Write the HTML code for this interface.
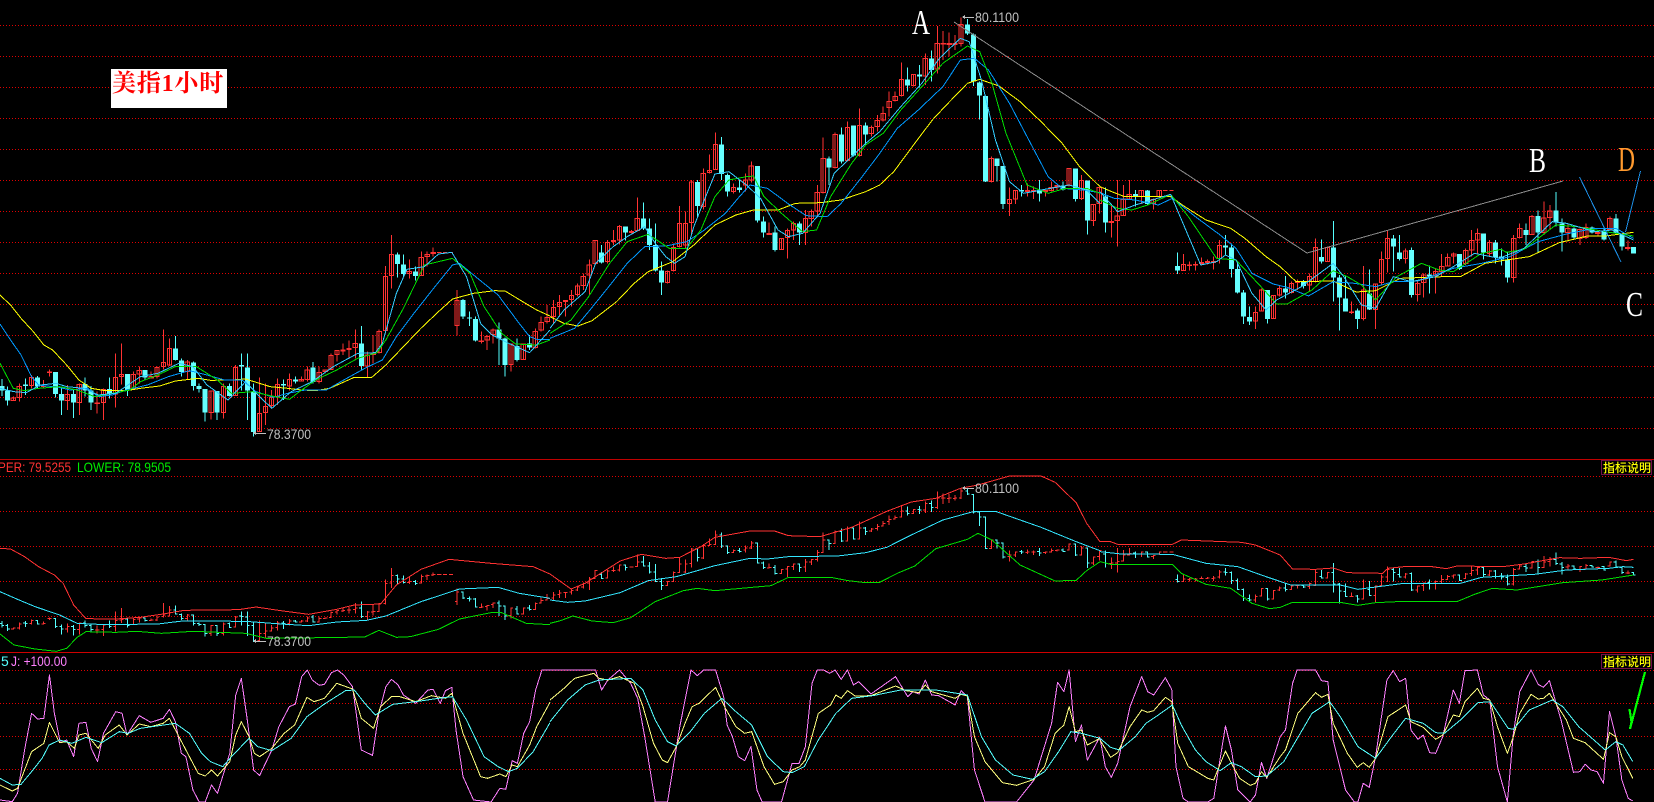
<!DOCTYPE html>
<html><head><meta charset="utf-8"><title>美指1小时</title>
<style>
html,body{margin:0;padding:0;background:#000;width:1654px;height:802px;overflow:hidden}
svg{display:block;position:absolute;left:0;top:0}
.s{fill:none;vector-effect:non-scaling-stroke;shape-rendering:crispEdges}
.m{fill:none;vector-effect:non-scaling-stroke;stroke-width:1;stroke-linejoin:round;shape-rendering:crispEdges}
.t{font-family:"Liberation Sans",sans-serif}
</style></head><body>
<svg width="1654" height="802" viewBox="0 0 1654 802" xmlns="http://www.w3.org/2000/svg">
<rect width="1654" height="802" fill="#000"/>
<defs>
<path id="rw1" class="s" d="M38 1190V1201M55 1150V1205M90 1125V1165M124 1140V1165M141 1108V1130M192 1155V1230M226 1150V1245M277 1175V1240M295 1165V1260M329 1060V1222M346 1030V1153M380 1115V1170M397 1100V1150M431 1115V1135M448 1100V1135M466 988V1108M483 1015V1098M534 1080V1140M602 1172V1258M637 1150V1255M671 1095V1188M740 1132V1295M757 1150V1275M774 1170V1222M791 1135V1215M825 1120V1172M859 1130V1145M876 1100V1145M910 1100V1150M927 1110V1120M944 1060V1110M961 1050V1085M978 1030V1065M995 1022V1075M1013 988V1075M1047 1055V1132M1064 1005V1090M1081 988V1060M1099 798V1000M1116 705V865M1167 778V835M1201 755V828M1218 755V800M1235 742V770M1246 758h12M1263 758h12M1280 758h12M1303 870V1007M1372 995V1030M1389 1005V1050M1406 985V1030M1457 1030V1115M1492 1030V1080M1526 985V1045M1543 950V995M1560 915V970"/>
<path id="rb1" class="s" d="M32 1194h12V1201h-12zM49 1160h12V1192h-12zM84 1133h12V1157h-12zM118 1158h12V1160h-12zM135 1116h12V1118h-12zM186 1183h12V1202h-12zM220 1153h12V1207h-12zM271 1209h12V1211h-12zM289 1168h12V1208h-12zM323 1132h12V1182h-12zM340 1123h12V1129h-12zM374 1123h12V1167h-12zM391 1111h12V1122h-12zM425 1130h12V1134h-12zM442 1103h12V1130h-12zM460 1088h12V1100h-12zM477 1045h12V1095h-12zM528 1086h12V1115h-12zM596 1173h12V1238h-12zM631 1160h12V1238h-12zM665 1102h12V1186h-12zM734 1240h12V1295h-12zM751 1220h12V1238h-12zM768 1192h12V1217h-12zM785 1153h12V1190h-12zM819 1138h12V1158h-12zM853 1138h12V1143h-12zM870 1110h12V1138h-12zM904 1118h12V1145h-12zM921 1110h12V1115h-12zM938 1067h12V1108h-12zM955 1052h12V1063h-12zM972 1050h12V1053h-12zM989 1045h12V1048h-12zM1007 1030h12V1043h-12zM1041 1065h12V1098h-12zM1058 1060h12V1063h-12zM1075 994h12V1058h-12zM1093 829h12V992h-12zM1110 763h12V826h-12zM1161 815h12V820h-12zM1195 772h12V827h-12zM1212 764h12V769h-12zM1229 757h12V760h-12zM1297 901h12V976h-12zM1366 1023h12V1025h-12zM1383 1010h12V1020h-12zM1400 990h12V1003h-12zM1451 1032h12V1093h-12zM1486 1032h12V1078h-12zM1520 994h12V1042h-12zM1537 968h12V990h-12zM1554 952h12V964h-12z"/>
<path id="rt1" class="s" d="M32 1201h6V1194h6M49 1192h6V1160h6M84 1157h6V1133h6M118 1160h6V1158h6M135 1118h6V1116h6M186 1202h6V1183h6M220 1207h6V1153h6M271 1211h6V1209h6M289 1208h6V1168h6M323 1182h6V1132h6M340 1129h6V1123h6M374 1167h6V1123h6M391 1122h6V1111h6M425 1134h6V1130h6M442 1130h6V1103h6M460 1100h6V1088h6M477 1095h6V1045h6M528 1115h6V1086h6M596 1238h6V1173h6M631 1238h6V1160h6M665 1186h6V1102h6M734 1295h6V1240h6M751 1238h6V1220h6M768 1217h6V1192h6M785 1190h6V1153h6M819 1158h6V1138h6M853 1143h6V1138h6M870 1138h6V1110h6M904 1145h6V1118h6M921 1115h6V1110h6M938 1108h6V1067h6M955 1063h6V1052h6M972 1053h6V1050h6M989 1048h6V1045h6M1007 1043h6V1030h6M1041 1098h6V1065h6M1058 1063h6V1060h6M1075 1058h6V994h6M1093 992h6V829h6M1110 826h6V763h6M1161 820h6V815h6M1195 827h6V772h6M1212 769h6V764h6M1229 760h6V757h6M1297 976h6V901h6M1366 1025h6V1023h6M1383 1020h6V1010h6M1400 1003h6V990h6M1451 1093h6V1032h6M1486 1078h6V1032h6M1520 1042h6V994h6M1537 990h6V968h6M1554 964h6V952h6"/>
<path id="cw1" class="s" d="M5 1137V1188M22 1160V1217M72 1135V1185M107 1128V1165M158 1116V1193M175 1165V1245M209 1170V1254M243 1133V1190M260 1158V1230M312 1132V1195M363 1122V1188M414 1110V1142M500 1008V1082M517 1075V1130M551 1085V1172M568 1150V1178M585 1167V1265M619 1173V1260M654 1150V1190M688 1060V1172M705 1060V1260M723 1150V1310M808 1138V1200M842 1130V1150M893 1086V1150M1030 978V1110M1133 757V833M1150 763V830M1184 800V842M1320 897V957M1338 935V978M1355 950V1025M1423 968V1095M1440 1012V1130M1474 1015V1085M1509 1005V1050"/>
<path id="cb1" class="s" d="M5 1158V1172M22 1172V1202M72 1153V1158M107 1133V1160M158 1116V1182M175 1182V1202M209 1182V1208M243 1152V1172M260 1172V1208M312 1167V1182M363 1122V1172M414 1110V1132M500 1045V1080M517 1082V1116M551 1087V1158M568 1158V1167M585 1167V1238M619 1173V1238M654 1158V1188M688 1095V1100M705 1102V1172M723 1175V1296M808 1152V1156M842 1138V1145M893 1102V1146M1030 1030V1098M1133 763V792M1150 793V822M1184 814V828M1320 900V950M1338 952V956M1355 957V1022M1423 988V1015M1440 1015V1095M1474 1038V1080M1509 1030V1043"/>
<path id="ct1" class="s" d="M-1 1158h6V1172h6M16 1172h6V1202h6M66 1153h6V1158h6M101 1133h6V1160h6M152 1116h6V1182h6M169 1182h6V1202h6M203 1182h6V1208h6M237 1152h6V1172h6M254 1172h6V1208h6M306 1167h6V1182h6M357 1122h6V1172h6M408 1110h6V1132h6M494 1045h6V1080h6M511 1082h6V1116h6M545 1087h6V1158h6M562 1158h6V1167h6M579 1167h6V1238h6M613 1173h6V1238h6M648 1158h6V1188h6M682 1095h6V1100h6M699 1102h6V1172h6M717 1175h6V1296h6M802 1152h6V1156h6M836 1138h6V1145h6M887 1102h6V1146h6M1024 1030h6V1098h6M1127 763h6V792h6M1144 793h6V822h6M1178 814h6V828h6M1314 900h6V950h6M1332 952h6V956h6M1349 957h6V1022h6M1417 988h6V1015h6M1434 1015h6V1095h6M1468 1038h6V1080h6M1503 1030h6V1043h6"/>

<path id="rw2" class="s" d="M10 900V970M27 885V950M44 900V950M61 870V920M78 850V890M95 820V870M112 778V883M129 720V793M164 720V790M181 690V735M198 675V733M232 690V700M249 592V695M335 812V850M352 730V815M369 618V742M386 635V745M403 540V700M437 505V628M455 463V520M472 397V510M523 550V580M557 520V575M574 484V548M625 668V705M660 714V750M677 685V776M694 665V720M728 630V735M745 628V680M762 555V650M779 412V580M813 398V505M848 365V485M882 325V470M916 376V410M933 345V395M950 320V365M967 275V350M984 275V305M1002 187V290M1036 222V260M1070 160V255M1104 78V220M1121 93V180M1138 97V170M1155 105V150M1172 52V140M1258 470V547M1310 562V648M1327 570V612M1361 550V590M1378 560V597M1412 570V590M1429 545V575M1446 555V570M1480 505V560M1515 525V600M1549 612V678M1566 562V640"/>
<path id="rb2" class="s" d="M4 922h12V950h-12zM21 908h12V920h-12zM38 902h12V905h-12zM55 887h12V899h-12zM72 858h12V884h-12zM89 830h12V857h-12zM106 795h12V825h-12zM123 722h12V790h-12zM158 727h12V785h-12zM175 722h12V725h-12zM192 680h12V720h-12zM226 694h12V697h-12zM243 656h12V692h-12zM329 814h12V848h-12zM346 742h12V812h-12zM363 670h12V740h-12zM380 670h12V735h-12zM397 546h12V668h-12zM431 520h12V620h-12zM449 511h12V518h-12zM466 433h12V509h-12zM517 562h12V575h-12zM551 540h12V555h-12zM568 498h12V540h-12zM619 700h12V703h-12zM654 715h12V748h-12zM671 692h12V712h-12zM688 670h12V690h-12zM722 655h12V697h-12zM739 634h12V655h-12zM756 577h12V633h-12zM773 475h12V577h-12zM807 403h12V503h-12zM842 382h12V482h-12zM876 376h12V467h-12zM910 383h12V401h-12zM927 362h12V380h-12zM944 340h12V360h-12zM961 305h12V322h-12zM978 290h12V302h-12zM996 238h12V287h-12zM1030 223h12V257h-12zM1064 175h12V228h-12zM1098 130h12V207h-12zM1115 130h12V132h-12zM1132 130h12V133h-12zM1149 130h12V133h-12zM1166 73h12V130h-12zM1252 475h12V545h-12zM1304 598h12V611h-12zM1321 571h12V597h-12zM1355 571h12V575h-12zM1372 572h12V574h-12zM1406 572h12V575h-12zM1423 562h12V572h-12zM1440 557h12V560h-12zM1474 505h12V557h-12zM1509 541h12V595h-12zM1543 613h12V662h-12zM1560 562h12V610h-12z"/>
<path id="rt2" class="s" d="M4 950h6V922h6M21 920h6V908h6M38 905h6V902h6M55 899h6V887h6M72 884h6V858h6M89 857h6V830h6M106 825h6V795h6M123 790h6V722h6M158 785h6V727h6M175 725h6V722h6M192 720h6V680h6M226 697h6V694h6M243 692h6V656h6M329 848h6V814h6M346 812h6V742h6M363 740h6V670h6M380 735h6V670h6M397 668h6V546h6M431 620h6V520h6M449 518h6V511h6M466 509h6V433h6M517 575h6V562h6M551 555h6V540h6M568 540h6V498h6M619 703h6V700h6M654 748h6V715h6M671 712h6V692h6M688 690h6V670h6M722 697h6V655h6M739 655h6V634h6M756 633h6V577h6M773 577h6V475h6M807 503h6V403h6M842 482h6V382h6M876 467h6V376h6M910 401h6V383h6M927 380h6V362h6M944 360h6V340h6M961 322h6V305h6M978 302h6V290h6M996 287h6V238h6M1030 257h6V223h6M1064 228h6V175h6M1098 207h6V130h6M1115 132h6V130h6M1132 133h6V130h6M1149 133h6V130h6M1166 130h6V73h6M1252 545h6V475h6M1304 611h6V598h6M1321 597h6V571h6M1355 575h6V571h6M1372 574h6V572h6M1406 575h6V572h6M1423 572h6V562h6M1440 560h6V557h6M1474 557h6V505h6M1509 595h6V541h6M1543 662h6V613h6M1560 610h6V562h6"/>
<path id="cw2" class="s" d="M147 735V790M215 679V722M266 607V690M284 655V750M301 670V815M318 785V885M420 540V650M489 411V540M506 520V590M540 540V578M591 498V668M608 650V713M642 680V755M711 665V735M796 470V555M831 382V490M865 376V470M899 368V435M1019 202V275M1053 195V262M1087 152V245M1190 57V105M1207 100V258M1224 245V358M1241 287V546M1275 475V545M1292 498V627M1344 555V590M1395 540V605M1463 545V572M1498 505V605M1532 541V704"/>
<path id="cb2" class="s" d="M147 757V787M215 679V698M266 655V686M284 686V735M301 735V812M318 812V848M420 546V618M489 433V522M506 525V575M540 562V570M591 498V662M608 664V698M642 698V750M711 670V698M796 475V503M831 403V484M865 376V467M899 376V403M1019 238V257M1053 223V230M1087 175V210M1190 73V100M1207 103V245M1224 247V287M1241 288V545M1275 475V498M1292 498V612M1344 570V574M1395 570V580M1463 557V568M1498 505V597M1532 541V662"/>
<path id="ct2" class="s" d="M141 757h6V787h6M209 679h6V698h6M260 655h6V686h6M278 686h6V735h6M295 735h6V812h6M312 812h6V848h6M414 546h6V618h6M483 433h6V522h6M500 525h6V575h6M534 562h6V570h6M585 498h6V662h6M602 664h6V698h6M636 698h6V750h6M705 670h6V698h6M790 475h6V503h6M825 403h6V484h6M859 376h6V467h6M893 376h6V403h6M1013 238h6V257h6M1047 223h6V230h6M1081 175h6V210h6M1184 73h6V100h6M1201 103h6V245h6M1218 247h6V287h6M1235 288h6V545h6M1269 475h6V498h6M1286 498h6V612h6M1338 570h6V574h6M1389 570h6V580h6M1457 557h6V568h6M1492 505h6V597h6M1526 541h6V662h6"/>

<path id="rw3" class="s" d="M32 618V712M49 540V740M66 555V648M83 540V600M117 570V612M151 595V628M168 570V595M179 572h12M196 572h12M236 762V812M253 785V812M270 785V812M287 772V793M304 778V793M321 770V808M338 720V790M440 920V987M457 865V935M491 885V957M508 855V890M542 845V880M559 838V870M593 820V875M610 715V848M644 740V785M712 905V942M746 798V962M780 850V987M797 755V855M814 690V818M865 745V790M899 845V905M916 820V893M950 805V880M967 762V830M984 760V800M1001 758V790M1035 745V795M1052 690V770M1069 685V760M1103 720V770M1171 705V848M1188 670V715M1222 645V705M1256 605V705M1273 615V690M1324 670V725M1358 685V735M1375 670V717M1409 690V710M1443 650V690M1494 722V752"/>
<path id="rb3" class="s" d="M26 664h12V667h-12zM43 648h12V662h-12zM60 598h12V647h-12zM77 583h12V597h-12zM111 571h12V590h-12zM145 599h12V610h-12zM162 571h12V590h-12zM230 794h12V812h-12zM247 795h12V797h-12zM264 793h12V795h-12zM281 787h12V791h-12zM298 785h12V787h-12zM315 785h12V787h-12zM332 737h12V775h-12zM434 937h12V963h-12zM451 870h12V933h-12zM485 886h12V955h-12zM502 865h12V885h-12zM536 851h12V878h-12zM553 845h12V848h-12zM587 829h12V855h-12zM604 742h12V845h-12zM638 742h12V785h-12zM706 936h12V938h-12zM740 870h12V955h-12zM774 852h12V928h-12zM791 778h12V848h-12zM808 716h12V775h-12zM859 753h12V776h-12zM893 850h12V883h-12zM910 825h12V848h-12zM944 815h12V827h-12zM961 799h12V815h-12zM978 772h12V798h-12zM995 762h12V768h-12zM1029 752h12V790h-12zM1046 722h12V750h-12zM1063 700h12V720h-12zM1097 728h12V760h-12zM1165 715h12V833h-12zM1182 685h12V712h-12zM1216 650h12V703h-12zM1250 654h12V698h-12zM1267 633h12V652h-12zM1318 685h12V697h-12zM1352 689h12V715h-12zM1369 683h12V713h-12zM1403 698h12V700h-12zM1437 655h12V688h-12zM1488 743h12V745h-12z"/>
<path id="rt3" class="s" d="M26 667h6V664h6M43 662h6V648h6M60 647h6V598h6M77 597h6V583h6M111 590h6V571h6M145 610h6V599h6M162 590h6V571h6M230 812h6V794h6M247 797h6V795h6M264 795h6V793h6M281 791h6V787h6M298 787h6V785h6M315 787h6V785h6M332 775h6V737h6M434 963h6V937h6M451 933h6V870h6M485 955h6V886h6M502 885h6V865h6M536 878h6V851h6M553 848h6V845h6M587 855h6V829h6M604 845h6V742h6M638 785h6V742h6M706 938h6V936h6M740 955h6V870h6M774 928h6V852h6M791 848h6V778h6M808 775h6V716h6M859 776h6V753h6M893 883h6V850h6M910 848h6V825h6M944 827h6V815h6M961 815h6V799h6M978 798h6V772h6M995 768h6V762h6M1029 790h6V752h6M1046 750h6V722h6M1063 720h6V700h6M1097 760h6V728h6M1165 833h6V715h6M1182 712h6V685h6M1216 703h6V650h6M1250 698h6V654h6M1267 652h6V633h6M1318 697h6V685h6M1352 715h6V689h6M1369 713h6V683h6M1403 700h6V698h6M1437 688h6V655h6M1488 745h6V743h6"/>
<path id="cw3" class="s" d="M15 562V698M100 570V620M134 570V615M219 757V822M355 705V765M372 730V833M389 790V880M406 870V972M423 920V975M474 870V970M525 828V895M576 840V865M627 718V790M661 663V905M678 825V992M695 830V935M729 925V987M763 808V930M831 705V815M848 705V782M882 742V893M933 797V880M1018 762V810M1086 700V778M1120 720V790M1137 745V797M1154 755V848M1205 670V735M1239 632V758M1290 576V680M1307 655V755M1341 683V717M1392 680V700M1426 685V722M1460 642V700M1477 700V752"/>
<path id="cb3" class="s" d="M15 590V668M100 582V590M134 571V612M219 798V812M355 737V742M372 742V807M389 807V878M406 878V950M423 951V965M474 870V957M525 865V878M576 845V858M627 771V785M661 742V833M678 833V892M695 895V935M729 931V957M763 880V928M831 715V740M848 757V777M882 750V885M933 823V830M1018 762V807M1086 700V757M1120 727V772M1137 770V778M1154 780V833M1205 690V705M1239 648V698M1290 632V668M1307 670V698M1341 685V713M1392 683V697M1426 692V719M1460 655V697M1477 700V740M1510 741V761"/>
<path id="ct3" class="s" d="M9 590h6V668h6M94 582h6V590h6M128 571h6V612h6M213 798h6V812h6M349 737h6V742h6M366 742h6V807h6M383 807h6V878h6M400 878h6V950h6M417 951h6V965h6M468 870h6V957h6M519 865h6V878h6M570 845h6V858h6M621 771h6V785h6M655 742h6V833h6M672 833h6V892h6M689 895h6V935h6M723 931h6V957h6M757 880h6V928h6M825 715h6V740h6M842 757h6V777h6M876 750h6V885h6M927 823h6V830h6M1012 762h6V807h6M1080 700h6V757h6M1114 727h6V772h6M1131 770h6V778h6M1148 780h6V833h6M1199 690h6V705h6M1233 648h6V698h6M1284 632h6V668h6M1301 670h6V698h6M1335 685h6V713h6M1386 683h6V697h6M1420 692h6V719h6M1454 655h6V697h6M1471 700h6V740h6M1504 741h6V761h6"/>
</defs>

<!-- grid -->
<g stroke="#e00000" stroke-width="1" stroke-dasharray="1 2" shape-rendering="crispEdges">
<path d="M0 25.5H1654M0 56.5H1654M0 87.5H1654M0 118.5H1654M0 149.5H1654M0 180.5H1654M0 211.5H1654M0 242.5H1654M0 273.5H1654M0 304.5H1654M0 335.5H1654M0 366.5H1654M0 397.5H1654M0 428.5H1654"/>
<path d="M0 476.5H1654M0 511.5H1654M0 546.5H1654M0 581.5H1654M0 616.5H1654"/>
<path d="M0 670.5H1654M0 703.5H1654M0 736.5H1654M0 769.5H1654"/>
</g>
<path d="M0 459.5H1654" stroke="#c00000" shape-rendering="crispEdges"/>
<path d="M0 652.5H1654" stroke="#d00000" stroke-width="1.4" shape-rendering="crispEdges"/>

<!-- main candles -->
<g transform="scale(.35077,.33333)">
<use href="#rw1" stroke="#ff3232"/><use href="#rb1" stroke="#ff3232" style="fill:#000"/>
<use href="#cw1" stroke="#55ffff"/><use href="#cb1" stroke="#66ffff" stroke-width="5"/>
<g stroke-width="1">
<polyline class="m" stroke="#ffff00" points="0,885 30,915 60,955 95,995 125,1035 150,1050 190,1095 225,1140 260,1165 300,1172 360,1172 400,1165 455,1158 500,1143 565,1135 600,1141 660,1140 700,1137 770,1160 820,1165 860,1170 900,1172 940,1165 1010,1132 1060,1132 1100,1095 1150,1040 1200,985 1250,935 1290,897 1350,880 1410,872 1440,873 1490,905 1530,930 1568,948"/>
<polyline class="m" stroke="#0099ff" points="0,972 30,1020 60,1065 90,1130 110,1155 130,1158 160,1160 200,1170 250,1165 280,1190 320,1185 360,1170 420,1155 480,1130 540,1112 590,1125 640,1140 690,1140 730,1175 780,1192 820,1180 870,1170 930,1170 980,1140 1040,1105 1090,1080 1130,1010 1180,940 1240,860 1290,795 1310,790 1350,825 1420,885 1480,970 1510,1010 1530,1018 1568,1018"/>
<polyline class="m" stroke="#00dd00" points="0,1090 20,1130 38,1165 70,1172 110,1165 170,1160 220,1170 270,1190 320,1180 370,1170 400,1145 450,1125 500,1100 560,1100 620,1140 660,1180 720,1175 770,1187 825,1198 860,1170 900,1140 960,1110 1020,1075 1075,1058 1100,1020 1150,925 1210,795 1250,785 1290,775 1340,820 1380,920 1430,1000 1470,1032 1530,1035 1568,1020"/>
<polyline class="m" stroke="#33ccff" points="0,1165 40,1175 75,1178 115,1155 160,1150 190,1160 240,1165 280,1185 330,1180 400,1130 450,1120 510,1090 550,1100 590,1155 650,1200 700,1145 740,1190 775,1225 830,1175 890,1145 950,1100 1020,1060 1070,1058 1090,1030 1130,880 1160,808 1210,800 1250,762 1288,757 1330,830 1370,970 1400,1003 1450,1030 1510,1058 1568,990"/>
</g></g>
<g transform="translate(550,0) scale(.35077,.33333)">
<use href="#rw2" stroke="#ff3232"/><use href="#rb2" stroke="#ff3232" style="fill:#000"/>
<use href="#cw2" stroke="#55ffff"/><use href="#cb2" stroke="#66ffff" stroke-width="5"/>
<polyline class="m" stroke="#ffff00" points="0,950 40,970 80,978 120,962 190,905 240,850 280,815 350,785 410,735 470,675 530,645 580,630 650,630 700,610 770,608 830,600 900,575 940,555 980,515 1040,430 1090,360 1130,315 1190,250 1225,238 1280,258 1340,305 1400,365 1460,430 1510,500 1568,560"/>
<polyline class="m" stroke="#0099ff" points="0,1015 70,985 110,935 160,870 220,790 270,740 330,738 390,725 440,690 500,640 540,590 570,555 620,565 680,612 730,647 790,650 830,610 890,530 940,460 990,385 1050,330 1120,260 1170,180 1210,175 1250,210 1310,310 1370,430 1420,530 1460,565 1520,570 1568,578"/>
<polyline class="m" stroke="#00dd00" points="0,1000 60,960 110,890 170,790 220,725 280,703 340,745 390,745 430,690 470,590 510,540 560,530 580,528 610,590 660,640 720,695 760,690 800,590 860,490 900,435 950,400 1000,330 1060,260 1120,190 1190,138 1225,155 1260,250 1300,400 1360,555 1420,580 1470,565 1530,565 1568,580"/>
<polyline class="m" stroke="#33ccff" points="0,985 40,930 100,875 130,790 180,740 220,710 270,680 300,730 330,770 355,790 385,770 410,680 440,600 470,522 510,515 560,555 600,595 650,690 680,710 720,700 770,640 810,520 870,460 900,430 940,395 1000,320 1060,250 1110,175 1170,115 1195,125 1230,240 1270,420 1310,545 1350,580 1400,570 1480,555 1530,570 1568,610"/>
</g>
<g transform="translate(1100,0) scale(.35332,.33333)">
<use href="#rw3" stroke="#ff3232"/><use href="#rb3" stroke="#ff3232" style="fill:#000"/>
<use href="#cw3" stroke="#55ffff"/><use href="#cb3" stroke="#66ffff" stroke-width="5"/>
<polyline class="m" stroke="#ffff00" points="0,560 40,578 70,590 200,590 240,620 300,660 370,685 410,715 470,770 510,800 555,845 660,843 725,876 780,872 850,835 970,830 1020,830 1090,790 1150,780 1215,770 1300,728 1380,708 1430,708 1510,697"/>
<polyline class="m" stroke="#0099ff" points="0,578 40,595 100,600 165,615 205,595 270,650 340,705 385,745 430,820 490,852 530,862 590,888 660,845 720,850 780,860 830,845 900,843 1000,805 1080,790 1160,770 1240,725 1320,702 1400,685 1460,685 1510,715"/>
<polyline class="m" stroke="#00dd00" points="0,600 50,625 90,630 135,615 200,583 250,650 330,775 385,780 460,865 500,912 530,912 600,870 660,812 700,830 740,855 780,900 840,830 910,790 960,810 1000,815 1080,760 1135,748 1150,757 1200,748 1290,675 1350,680 1430,695 1510,708"/>
<polyline class="m" stroke="#33ccff" points="0,575 50,635 100,615 200,583 285,795 330,785 355,765 385,780 430,880 470,930 500,900 570,860 660,790 690,830 740,915 780,925 830,830 880,845 950,830 1000,800 1060,760 1130,775 1200,745 1280,665 1320,670 1400,695 1450,690 1510,720"/>
</g>

<!-- overlays main -->
<g fill="none" shape-rendering="crispEdges">
<polyline points="954,22 1307,253 1563,181" stroke="#8a8a8a" stroke-width="1"/>
<path d="M1579.5 177L1621 262M1625.5 232L1640.5 171" stroke="#1e90e8" stroke-width="1"/>
<path d="M1629.5 709L1631.5 722L1630 729L1645 672" stroke="#00ff00" stroke-width="2.2"/>
</g>

<!-- BOLL bars -->
<g transform="translate(0,482) scale(.35077,.1223)">
<use href="#rw1" stroke="#ff3232"/><use href="#rt1" stroke="#ff3232"/><use href="#cw1" stroke="#55ffff"/><use href="#ct1" stroke="#55ffff"/>
</g>
<g transform="translate(550,482) scale(.35077,.1223)">
<use href="#rw2" stroke="#ff3232"/><use href="#rt2" stroke="#ff3232"/><use href="#cw2" stroke="#55ffff"/><use href="#ct2" stroke="#55ffff"/>
</g>
<g transform="translate(1100,482) scale(.35332,.1223)">
<use href="#rw3" stroke="#ff3232"/><use href="#rt3" stroke="#ff3232"/><use href="#cw3" stroke="#55ffff"/><use href="#ct3" stroke="#55ffff"/>
</g>
<!-- BOLL and KDJ lines -->
<g transform="translate(0,450) scale(.35077,.33333)">
<polyline class="m" stroke="#ff3232" points="0,295 30,297 70,320 110,350 155,375 180,400 210,465 245,506 330,507 400,502 465,492 525,481 680,479 730,471 800,482 880,493 960,478 1010,465 1085,462 1130,405 1200,358 1280,328 1400,340 1520,350 1568,372"/>
<polyline class="m" stroke="#33e6ff" points="0,425 50,448 100,470 170,495 220,520 300,524 450,522 520,513 700,514 800,522 880,527 960,516 1045,511 1100,498 1200,455 1310,417 1420,412 1480,430 1568,445"/>
<polyline class="m" stroke="#00dd00" points="0,552 40,585 100,597 160,604 190,595 220,562 245,545 330,547 390,544 460,550 550,544 700,550 760,565 850,564 1040,561 1080,541 1130,562 1170,560 1250,538 1310,507 1400,488 1430,488 1500,520 1568,524"/>
<polyline class="m" stroke="#ff80ff" points="0,1050 35,1055 50,1030 70,900 90,790 107,807 125,805 141,675 155,790 172,878 190,870 210,920 225,820 245,817 260,895 278,935 295,850 330,785 348,790 362,855 397,797 430,817 465,805 483,778 500,815 517,910 530,920 550,1020 568,1056 585,1056 603,1005 620,1030 655,910 672,735 688,685 705,810 723,960 740,977 775,900 795,830 825,770 842,762 860,680 876,660 890,690 910,706 925,703 945,668 962,660 980,675 1005,710 1030,900 1062,916 1080,790 1100,710 1116,688 1135,705 1150,735 1185,760 1220,720 1235,718 1255,760 1270,722 1288,712 1300,840 1320,980 1350,1050 1400,1056 1425,1015 1442,1018 1460,932 1475,940 1493,850 1510,815 1527,720 1545,660 1568,660"/>
<polyline class="m" stroke="#ffff80" points="0,1005 35,1023 50,1015 70,960 90,905 125,880 141,817 170,878 190,875 212,895 225,855 245,850 280,895 300,855 340,825 362,855 397,822 430,830 465,820 483,805 510,860 530,900 565,970 585,978 603,960 620,978 655,935 672,855 688,815 710,860 725,910 740,920 775,895 810,850 840,825 875,742 895,755 925,745 960,700 1005,717 1030,805 1065,835 1085,770 1116,740 1140,740 1185,755 1230,737 1270,745 1288,730 1320,850 1370,980 1390,985 1425,972 1442,980 1460,945 1475,950 1510,885 1530,830 1568,757"/>
<polyline class="m" stroke="#55ffff" points="0,985 35,1005 60,1003 90,965 120,925 140,885 170,870 205,880 245,862 290,878 340,845 365,850 400,835 500,820 540,850 575,910 600,935 635,950 660,920 710,865 735,890 775,902 830,865 875,800 925,762 985,722 1010,720 1040,760 1070,795 1120,763 1185,755 1250,745 1290,740 1330,810 1380,920 1420,950 1450,965 1475,955 1520,905 1568,818"/>
</g>
<g transform="translate(550,450) scale(.35077,.33333)">
<polyline class="m" stroke="#ff3232" points="0,372 60,417 100,400 200,333 260,313 330,325 370,322 430,290 470,262 570,243 640,243 680,257 770,260 860,232 960,184 1030,156 1100,145 1170,115 1220,105 1310,78 1400,78 1440,97 1500,158 1530,220 1568,275"/>
<polyline class="m" stroke="#33e6ff" points="0,450 50,457 100,453 200,428 280,392 360,380 470,347 570,325 620,327 680,320 820,318 900,308 960,292 1030,255 1120,210 1210,184 1270,184 1400,232 1500,275 1568,302"/>
<polyline class="m" stroke="#00dd00" points="0,520 30,512 65,498 120,513 180,518 230,503 300,455 380,422 420,415 470,422 630,407 680,382 800,382 850,392 900,398 940,397 990,370 1040,348 1100,296 1190,268 1220,250 1260,270 1340,345 1440,393 1500,391 1530,362 1568,335"/>
<polyline class="m" stroke="#ff80ff" points="0,660 130,660 147,720 165,690 198,660 230,700 250,745 270,860 300,1056 335,1056 370,830 402,660 420,677 438,660 472,660 495,740 505,825 520,860 537,920 555,932 573,890 590,1020 605,1056 660,1056 690,940 710,940 728,890 747,700 762,660 780,660 797,670 813,660 830,688 848,660 865,705 880,695 915,732 985,680 1020,740 1035,725 1052,732 1070,690 1088,735 1108,737 1155,765 1172,722 1190,740 1210,960 1240,1056 1330,1056 1380,990 1430,820 1447,697 1465,725 1480,660 1498,875 1515,825 1532,930 1568,860"/>
<polyline class="m" stroke="#ffff80" points="0,750 40,715 70,685 125,670 140,685 165,690 198,680 240,700 265,770 295,880 320,930 335,938 360,890 385,820 405,770 425,760 472,712 500,775 530,830 555,850 575,845 610,950 640,1003 665,995 690,960 712,950 728,930 765,790 800,765 815,735 830,745 848,722 870,738 915,737 985,708 1015,722 1052,728 1070,705 1088,725 1155,745 1172,733 1190,738 1210,860 1240,935 1290,998 1330,1006 1380,988 1410,950 1440,850 1465,825 1480,770 1498,845 1515,840 1532,885 1568,865"/>
<polyline class="m" stroke="#55ffff" points="0,815 50,750 100,705 140,690 230,685 265,720 300,810 335,875 360,888 400,845 440,790 490,745 530,785 575,825 620,920 665,965 690,968 725,950 765,870 815,790 860,745 920,737 1000,720 1100,720 1190,735 1230,860 1270,930 1320,975 1375,988 1410,965 1450,905 1485,845 1515,850 1568,865"/>
</g>
<g transform="translate(1100,450) scale(.35332,.33333)">
<polyline class="m" stroke="#ff3232" points="0,274 30,275 50,283 205,283 230,270 400,277 440,285 510,315 545,357 610,358 660,354 700,368 800,370 815,355 860,350 940,350 980,356 1010,348 1140,350 1200,342 1300,323 1360,325 1440,322 1490,332 1510,328"/>
<polyline class="m" stroke="#33e6ff" points="0,305 60,312 205,313 300,340 390,350 470,380 540,405 680,405 730,418 860,400 1020,400 1080,382 1230,373 1320,360 1440,355 1480,350 1510,352"/>
<polyline class="m" stroke="#00dd00" points="0,335 30,343 205,343 230,370 300,403 370,415 430,460 480,476 510,472 545,457 680,457 730,466 780,458 840,455 1010,455 1060,433 1110,415 1180,420 1310,398 1420,390 1480,380 1510,375"/>
<polyline class="m" stroke="#ff80ff" points="0,865 15,950 32,982 50,940 85,770 118,680 135,725 152,735 185,683 203,718 215,950 235,1045 250,1056 305,1056 322,1045 355,828 372,900 390,1020 425,1056 440,1035 457,937 472,985 510,860 525,840 545,700 558,660 610,660 627,692 645,695 660,870 695,1020 720,1056 730,1056 745,1000 762,1012 780,920 812,690 830,662 848,695 865,685 880,840 900,868 915,855 933,908 950,910 970,860 1000,720 1017,760 1033,662 1068,660 1085,735 1103,750 1125,950 1153,1056 1170,850 1188,725 1220,660 1240,703 1255,712 1272,692 1305,810 1340,967 1358,965 1373,943 1390,960 1407,965 1425,1000 1442,785 1460,860 1477,990 1495,1045 1508,1053"/>
<polyline class="m" stroke="#ffff80" points="0,870 30,922 50,908 85,830 118,780 135,787 152,782 185,742 203,755 220,880 250,950 305,985 322,990 355,903 372,940 395,985 425,1006 440,1000 457,965 472,982 510,920 525,900 560,790 610,728 627,742 645,733 660,820 700,910 728,952 745,938 762,952 780,925 815,800 865,765 880,815 915,832 950,868 970,855 1000,795 1017,800 1033,755 1068,715 1085,745 1103,750 1125,830 1153,910 1170,860 1188,790 1220,733 1240,747 1255,745 1272,730 1320,810 1340,865 1373,878 1425,928 1442,848 1460,860 1477,920 1508,985"/>
<polyline class="m" stroke="#55ffff" points="0,865 30,892 55,900 100,860 130,820 165,795 205,765 230,825 270,900 300,935 340,962 372,938 400,950 440,980 472,978 520,935 600,790 650,755 680,800 730,890 780,925 825,860 865,805 915,820 950,848 975,850 1020,810 1070,758 1105,755 1155,835 1170,838 1215,780 1280,750 1310,770 1355,830 1430,900 1460,875 1480,885 1508,935"/>
</g>

<!-- price arrows -->
<g stroke="#c0c0c0" fill="#c0c0c0" shape-rendering="crispEdges">
<path d="M963 17.5H974M254 433.5H266M963 488.5H974M254 641.5H266"/>
<path d="M962 17l3-2v4zM253 433l3-2v4zM962 488l3-2v4zM253 641l3-2v4z" stroke="none"/>
</g>
<g class="t" font-size="13.5" fill="#c0c0c0">
<text x="975" y="22" textLength="44" lengthAdjust="spacingAndGlyphs">80.1100</text>
<text x="267" y="439" textLength="44" lengthAdjust="spacingAndGlyphs">78.3700</text>
<text x="975" y="493" textLength="44" lengthAdjust="spacingAndGlyphs">80.1100</text>
<text x="267" y="646" textLength="44" lengthAdjust="spacingAndGlyphs">78.3700</text>
</g>

<!-- header labels -->
<g class="t" font-size="14">
<text x="-2" y="472" fill="#ff3232" textLength="73" lengthAdjust="spacingAndGlyphs">PER: 79.5255</text>
<text x="77" y="472" fill="#00ee00" textLength="94" lengthAdjust="spacingAndGlyphs">LOWER: 78.9505</text>
<text x="1" y="666" fill="#55ffff">5</text>
<text x="11" y="666" fill="#ff80ff" textLength="56" lengthAdjust="spacingAndGlyphs">J: +100.00</text>
</g>

<!-- 指标说明 -->
<rect x="1601.5" y="460.5" width="50" height="14" fill="#000" stroke="#70104a" stroke-width="1"/>
<rect x="1601.5" y="654.5" width="50" height="14" fill="#000" stroke="#70104a" stroke-width="1"/>
<g font-family="'Liberation Sans','Noto Sans CJK SC',sans-serif" font-size="12" fill="#ffff00" font-weight="500">
<text x="1603" y="472">指标说明</text>
<text x="1603" y="666">指标说明</text>
</g>

<!-- title box -->
<rect x="111" y="69" width="116" height="39" fill="#fff"/>
<text x="112" y="91" font-family="'Liberation Serif','Noto Serif CJK SC',serif" font-size="24" font-weight="700" letter-spacing=".8" fill="#ff0000">美指1小时</text>

<!-- letters -->
<g font-family="'Liberation Serif',serif" font-size="35">
<text x="912" y="34" fill="#fff" textLength="18" lengthAdjust="spacingAndGlyphs">A</text>
<text x="1529" y="172" fill="#fff" textLength="17" lengthAdjust="spacingAndGlyphs">B</text>
<text x="1618" y="171" fill="#ff9a2e" textLength="17" lengthAdjust="spacingAndGlyphs">D</text>
<text x="1626" y="316" fill="#fff" textLength="17" lengthAdjust="spacingAndGlyphs">C</text>
</g>
</svg>
</body></html>
